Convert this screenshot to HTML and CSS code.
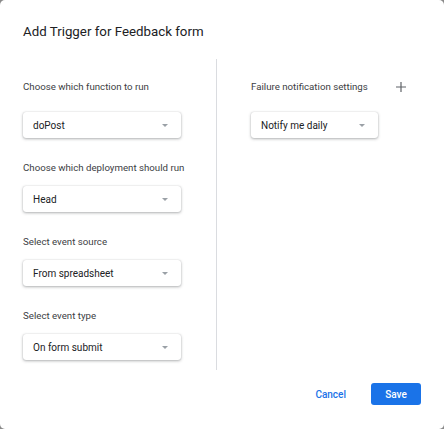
FILE: index.html
```html
<!DOCTYPE html>
<html>
<head>
<meta charset="utf-8">
<link rel="stylesheet" href="styles.css">
</head>
<body>
<div class="dialog">
  <div class="title">Add Trigger for Feedback form</div>
  <div class="cols">
    <div class="col left">
      <div class="field first">
        <div class="label">Choose which function to run</div>
        <div class="select"><span>doPost</span><i class="arrow"></i></div>
      </div>
      <div class="field">
        <div class="label">Choose which deployment should run</div>
        <div class="select"><span>Head</span><i class="arrow"></i></div>
      </div>
      <div class="field">
        <div class="label">Select event source</div>
        <div class="select"><span>From spreadsheet</span><i class="arrow"></i></div>
      </div>
      <div class="field">
        <div class="label">Select event type</div>
        <div class="select"><span>On form submit</span><i class="arrow"></i></div>
      </div>
    </div>
    <div class="col right">
      <div class="field first">
        <div class="label row">Failure notification settings
          <svg class="plus" width="12" height="12" viewBox="0 0 12 12"><path d="M6 1v10M1 6h10" stroke="#5f6368" stroke-width="1.2" fill="none"/></svg>
        </div>
        <div class="select narrow"><span>Notify me daily</span><i class="arrow"></i></div>
      </div>
    </div>
  </div>
  <div class="actions">
    <button class="btn text">Cancel</button>
    <button class="btn primary">Save</button>
  </div>
</div>
</body>
</html>
```
FILE: styles.css
```css
html, body { margin: 0; padding: 0; }
body {
  background: #8a8a8a;
  font-family: Roboto, "Liberation Sans", sans-serif;
  width: 444px;
  height: 429px;
  overflow: hidden;
}
.dialog {
  width: 444px;
  height: 429px;
  background: #fff;
  border-radius: 5px;
  box-sizing: border-box;
  display: flex;
  flex-direction: column;
}
.title {
  padding: 23px 23px 0;
  height: 36px;
  font-size: 13.3px;
  line-height: 18px;
  color: #202124;
  box-sizing: content-box;
}
.cols {
  display: flex;
  height: 311px;
}
.col.left {
  width: 193px;
  padding-left: 23px;
  border-right: 1px solid #dadce0;
  display: flex;
  flex-direction: column;
  padding-top: 20px;
}
.col.right {
  padding-left: 34px;
  padding-top: 20px;
  width: 156px;
}
.field { margin-bottom: 22px; }
.field.first .label { margin-bottom: 17px; }
.label {
  font-size: 9.7px;
  line-height: 16px;
  color: #3c4043;
  margin-bottom: 10px;
}
.label.row {
  display: flex;
  align-items: center;
  justify-content: space-between;
}
.select {
  width: 158px;
  height: 26px;
  box-sizing: border-box;
  border-radius: 3px;
  background: #fff;
  box-shadow: 0 1px 3px rgba(60,64,67,.4), 0 0 1px rgba(60,64,67,.25);
  display: flex;
  align-items: center;
  justify-content: space-between;
  padding: 0 13px 0 10px;
  font-size: 10px;
  color: #202124;
}
.select.narrow { width: 127px; }
.arrow {
  width: 0; height: 0;
  border-left: 3px solid transparent;
  border-right: 3px solid transparent;
  border-top: 3px solid #9aa0a6;
}
.actions {
  display: flex;
  justify-content: flex-end;
  align-items: center;
  padding: 13px 23px 0 0;
  gap: 25px;
}
.btn {
  font-family: Roboto, "Liberation Sans", sans-serif;
  font-size: 10px;
  font-weight: 500;
  border: 0;
  border-radius: 3px;
  height: 22px;
  cursor: pointer;
}
.btn.text { background: none; color: #1a73e8; padding: 0; }
.btn.primary { background: #1a73e8; color: #fff; width: 50px; }
```
